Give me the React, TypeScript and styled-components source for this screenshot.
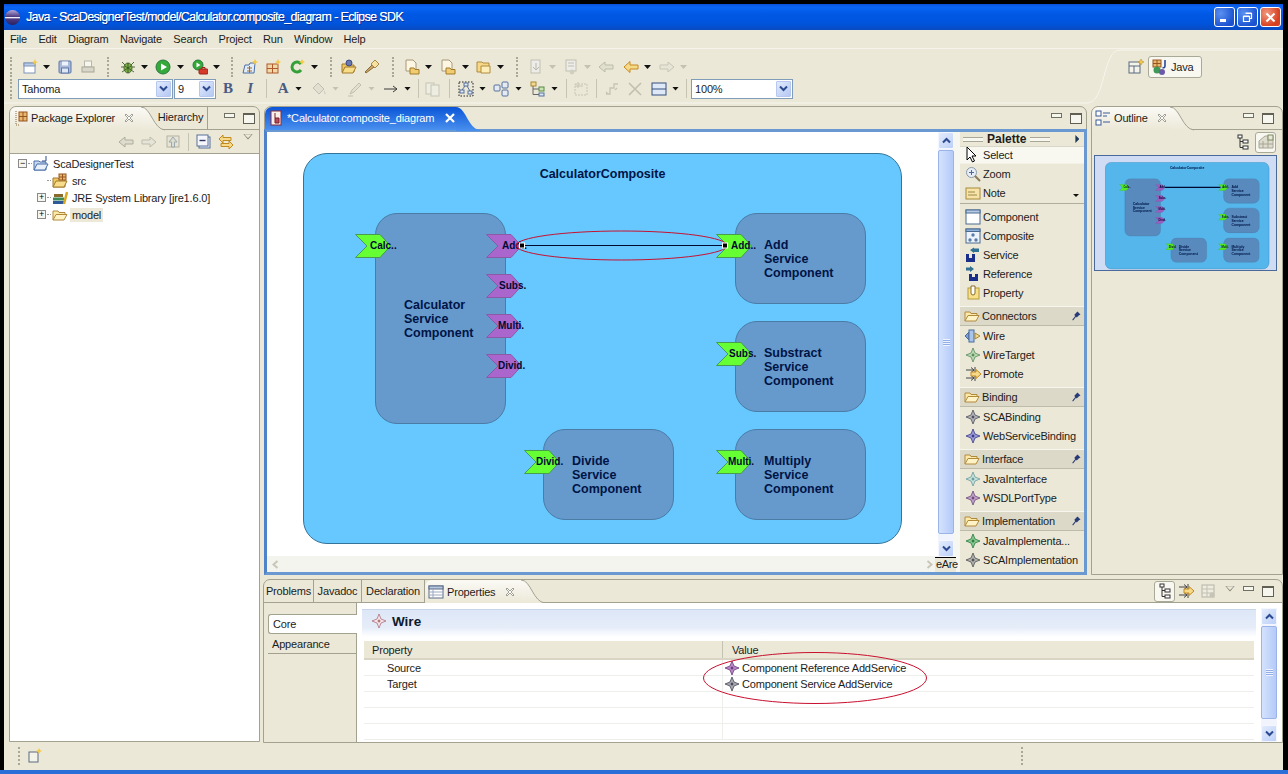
import React from 'react';
import styled, { createGlobalStyle } from 'styled-components';

const FONT = '"Liberation Sans", Arial, sans-serif';
const BG = '#ebe8d7';
const EDGE = '#a3a18f';

const GlobalStyle = createGlobalStyle`
  html, body { margin: 0; padding: 0; background: #000; overflow: hidden; }
  * { box-sizing: border-box; }
`;

// ---------- icons ----------
const star = '8,1 10,6 15,8 10,10 8,15 6,10 1,8 6,6';
const Diamond = ({ c, d }: { c: string; d: string }) => (
  <svg width="16" height="16" viewBox="0 0 16 16">
    <polygon points={star} fill={c} stroke={d} strokeWidth="0.8" />
    <rect x="6.8" y="6.8" width="2.4" height="2.4" fill={d} transform="rotate(45 8 8)" />
  </svg>
);

const Folder = () => (
  <svg width="16" height="16" viewBox="0 0 16 16">
    <path d="M1 13V4h5l1 1.5h6V8" fill="#fde8a8" stroke="#b08a3c" />
    <path d="M1 13l3-5.5h11L12 13z" fill="#fff2c4" stroke="#b08a3c" />
  </svg>
);

const icons: Record<string, React.ReactNode> = {
  newWin: (
    <>
      <rect x="2" y="4" width="11" height="10" fill="#fff" stroke="#7d93b8" />
      <rect x="2" y="4" width="11" height="3" fill="#b9cbe6" stroke="#7d93b8" />
      <polygon points="13,0 14,2.5 16,3 14,4 13,6.5 12,4 10,3 12,2.5" fill="#f3c94a" />
    </>
  ),
  save: (
    <>
      <rect x="2" y="2" width="12" height="12" rx="1" fill="#a9b9d8" stroke="#6078a8" />
      <rect x="5" y="2.5" width="6" height="4" fill="#eef2fa" />
      <rect x="4.5" y="9" width="7" height="5" fill="#dfe6f3" stroke="#6078a8" />
    </>
  ),
  print: (
    <>
      <rect x="4.5" y="2" width="7" height="6" fill="#f6f5ee" stroke="#b8b7a8" />
      <rect x="2" y="8" width="12" height="5" fill="#d8d6c8" stroke="#a8a798" />
    </>
  ),
  bug: (
    <>
      <path d="M2 3l3 3M14 3l-3 3M1 8h3M15 8h-3M2 13l3-2M14 13l-3-2" stroke="#4d6d3a" fill="none" />
      <ellipse cx="8" cy="9" rx="4" ry="5" fill="#7fb04a" stroke="#46682a" />
      <path d="M8 4v10M5 7l6 4M11 7l-6 4" stroke="#2f4d1c" strokeWidth="0.8" />
    </>
  ),
  run: (
    <>
      <circle cx="8" cy="8" r="7" fill="#35a83a" stroke="#2a7a40" />
      <polygon points="6,4.5 12,8 6,11.5" fill="#fff" />
    </>
  ),
  ext: (
    <>
      <circle cx="6" cy="6" r="5" fill="#35a83a" stroke="#2a7a40" />
      <polygon points="4.5,3.5 8.5,6 4.5,8.5" fill="#fff" />
      <rect x="7" y="10" width="9" height="5" rx="1" fill="#d83a2a" stroke="#982418" />
      <path d="M10 10V8.5h3V10" stroke="#982418" fill="none" />
    </>
  ),
  newPkg: (
    <>
      <path d="M1 14l2-8h4l1-2h5l-1 10z" fill="#e4ecf8" stroke="#4a6ea8" />
      <path d="M5 9h5M5 12h5M7.5 7v7" stroke="#a06a2a" />
      <polygon points="13,0 14,2 16,3 14,4 13,6 12,4 10,3 12,2" fill="#f3c94a" />
    </>
  ),
  newClass: (
    <>
      <rect x="2" y="5" width="11" height="9" fill="#f1d8a8" stroke="#b05a2a" />
      <path d="M7.5 5v9M2 9.5h11" stroke="#b05a2a" />
      <polygon points="13,0 14,2 16,3 14,4 13,6 12,4 10,3 12,2" fill="#f3c94a" />
    </>
  ),
  newG: (
    <>
      <path d="M12 11a5 5 0 1 1 0-6" fill="none" stroke="#35a03a" strokeWidth="3" />
      <polygon points="13,0 14,2 16,3 14,4 13,6 12,4 10,3 12,2" fill="#f3c94a" />
    </>
  ),
  openType: (
    <>
      <path d="M1 13V5h5l1 1h6v7z" fill="#f0c860" stroke="#a07a2c" />
      <path d="M1 14l3-6h11l-3 6z" fill="#f7dc8a" stroke="#a07a2c" />
      <circle cx="8" cy="4" r="3" fill="#6a78b0" stroke="#3e4a80" />
    </>
  ),
  torch: (
    <>
      <path d="M2 14l-1-1 7-7 2 2z" fill="#c8a468" stroke="#8a6c38" />
      <path d="M7 5l4-4 4 4-4 4z" fill="#f6e2a0" stroke="#a88a48" />
    </>
  ),
  fileA: (
    <>
      <path d="M2 1h7l3 3v8H2z" fill="#fdf6e2" stroke="#a89878" />
      <path d="M6 9h4l1 1.5h4V15H6z" fill="#f2cc70" stroke="#a07a2c" />
    </>
  ),
  fileB: (
    <>
      <path d="M1 3h5l1 1h6v9H1z" fill="#f6d888" stroke="#b08a3c" />
      <path d="M5 7h9v7H5z" fill="#fdeeb8" stroke="#b08a3c" />
    </>
  ),
  grayDocA: (
    <>
      <rect x="3" y="1" width="9" height="13" fill="#eee" stroke="#b4b3a6" />
      <path d="M8 4v6M5 8l3 3 3-3" stroke="#a9a89a" fill="none" />
    </>
  ),
  grayDocB: (
    <>
      <rect x="3" y="1" width="10" height="11" fill="#eee" stroke="#b4b3a6" />
      <path d="M5 4h6M5 7h6" stroke="#b4b3a6" />
      <circle cx="9" cy="13" r="2.4" fill="#c8c7b8" />
    </>
  ),
  backGray: <path d="M1 8l6-5v3h8v4H7v3z" fill="#dedccc" stroke="#aeac9c" />,
  fwdGray: <path d="M15 8L9 3v3H1v4h8v3z" fill="#e6e4d6" stroke="#bdbbac" />,
  backOrange: <path d="M1 8l6-5.5V6h8v4H7v3.500z" fill="#f7d98a" stroke="#c68a1e" />,
  upGray: (
    <>
      <rect x="2" y="2" width="12" height="11" fill="#e6e4d6" stroke="#b4b2a2" />
      <path d="M8 3l4 5H9.500v5h-3V8H4z" fill="#dedccc" stroke="#9aa8b0" />
    </>
  ),
  collapse: (
    <>
      <rect x="3" y="3" width="11" height="11" fill="#e4eaf4" stroke="#5a7098" />
      <rect x="1" y="1" width="11" height="11" fill="#f4f6fb" stroke="#5a7098" />
      <path d="M3.500 6.500h6" stroke="#2a3a60" strokeWidth="1.400" />
    </>
  ),
  link: (
    <>
      <path d="M1 5l4-4v2.500h8v3H5V9z" fill="#f7d98a" stroke="#c08a1e" />
      <path d="M15 11l-4-4v2.500H3v3h8V15z" fill="#f7d98a" stroke="#c08a1e" />
    </>
  ),
  fill: (
    <>
      <path d="M7 2l6 6-5 5-6-6z" fill="#dfddcf" stroke="#b4b2a4" />
      <path d="M13 9c1 2 2 3 1.500 4s-2 0-1.500-4z" fill="#c8c6b8" />
    </>
  ),
  pen: <path d="M3 13l2-4 7-7 2 2-7 7zM1 15h5" fill="#dedccc" stroke="#b4b2a4" />,
  lineArrow: <path d="M1 8h13M10 5l4 3-4 3" fill="none" stroke="#3a3a3a" />,
  docGray: (
    <>
      <rect x="1" y="2" width="8" height="11" fill="#f0efe6" stroke="#bab8aa" />
      <rect x="6" y="4" width="8" height="11" fill="#f0efe6" stroke="#bab8aa" />
    </>
  ),
  arrange: (
    <>
      <rect x="1" y="1" width="14" height="14" fill="none" stroke="#222" strokeDasharray="1.500 1.500" />
      <rect x="6" y="2" width="4" height="3" fill="#e4eaf4" stroke="#56709c" />
      <rect x="2" y="9" width="4" height="3" fill="#e4eaf4" stroke="#56709c" />
      <rect x="10" y="10" width="4" height="3" fill="#e4eaf4" stroke="#56709c" />
      <path d="M7 5l-3 4M9 5l3 5" stroke="#56709c" />
    </>
  ),
  align: (
    <>
      <rect x="1" y="4" width="6" height="6" rx="1" fill="#e4eaf4" stroke="#56709c" />
      <rect x="9" y="1" width="6" height="6" rx="1" fill="#e4eaf4" stroke="#56709c" />
      <rect x="9" y="9" width="6" height="6" rx="1" fill="#e4eaf4" stroke="#56709c" />
    </>
  ),
  treeAlign: (
    <>
      <rect x="1" y="1" width="5" height="4" fill="#f3d98c" stroke="#a88838" />
      <rect x="9" y="6" width="5" height="4" fill="#c8e4b0" stroke="#5a8a48" />
      <rect x="9" y="12" width="5" height="3" fill="#dbe6f6" stroke="#56709c" />
      <path d="M3 5v8.500h6M3 8h6" fill="none" stroke="#666" />
    </>
  ),
  frameGray: (
    <>
      <rect x="2" y="3" width="12" height="11" fill="none" stroke="#bbb9aa" strokeDasharray="2 1" />
      <path d="M5 1v6M2 5h8" stroke="#bbb9aa" />
    </>
  ),
  routeGray: <path d="M2 13h4V7h4V3h4M2 11l2 2M11 9l2-2" fill="none" stroke="#bbb9aa" strokeWidth="1.300" />,
  crossGray: <path d="M2 2l12 12M14 2L2 14" fill="none" stroke="#b4b2a4" strokeWidth="1.600" />,
  split: (
    <>
      <rect x="1" y="2" width="14" height="12" fill="#dfe8f6" stroke="#344f80" />
      <path d="M1 8h14" stroke="#344f80" />
    </>
  ),
  pkgExplorer: (
    <>
      <path d="M3 1v14h3" fill="none" stroke="#8a6a3a" strokeDasharray="1 1" />
      <rect x="6" y="2" width="8" height="9" fill="#e8b870" stroke="#96541e" />
      <path d="M10 2v9M6 6.500h8" stroke="#96541e" />
    </>
  ),
  project: (
    <>
      <path d="M1 14V5h5l1 1h6v8z" fill="#c8d8f0" stroke="#4a6ea8" />
      <path d="M1 14l3-6h11l-3 6z" fill="#e8f0fa" stroke="#4a6ea8" />
      <path d="M13 0v5H9" fill="none" stroke="#2a4a90" />
    </>
  ),
  srcFolder: (
    <>
      <path d="M1 14V5h5l1 1h6v8z" fill="#f0c860" stroke="#a07a2c" />
      <path d="M1 14l3-6h11l-3 6z" fill="#f7dc8a" stroke="#a07a2c" />
      <rect x="7" y="1" width="7" height="6" fill="#e8b870" stroke="#96541e" />
      <path d="M10.500 1v6M7 4h7" stroke="#96541e" />
    </>
  ),
  library: (
    <>
      <rect x="1" y="11" width="11" height="3" fill="#2e5a9a" />
      <rect x="1" y="7.500" width="11" height="3" fill="#3f8a54" />
      <rect x="2" y="4" width="9" height="3" fill="#8a6a2a" />
      <path d="M12 14l3-12" stroke="#d8a820" strokeWidth="2.500" />
    </>
  ),
  editorFile: (
    <>
      <rect x="3" y="1" width="10" height="14" fill="#f6f0e8" stroke="#8a2a3a" />
      <path d="M7 3v10h4V8H7" fill="#b84a5a" stroke="#7a1a2a" />
    </>
  ),
  outline: (
    <>
      <rect x="1" y="1" width="5" height="5" fill="#fff" stroke="#3a5a98" />
      <rect x="1" y="10" width="5" height="5" fill="#fff" stroke="#3a5a98" />
      <path d="M8 3h7M8 6h4M8 12h7" stroke="#3a5a98" />
    </>
  ),
  treeSmall: (
    <>
      <rect x="3" y="1" width="4" height="3" fill="#fff" stroke="#333" />
      <rect x="8" y="6" width="5" height="3" fill="#fff" stroke="#333" />
      <rect x="8" y="12" width="5" height="3" fill="#fff" stroke="#333" />
      <path d="M5 4v9.500h3M5 7.500h3" stroke="#333" fill="none" />
    </>
  ),
  thumb: (
    <>
      <path d="M1 7l6-5h8v12H1z" fill="#dedccc" stroke="#a8a698" />
      <path d="M1 10h14M5 7v7M10 3v11" stroke="#a8a698" />
      <rect x="10" y="1" width="5" height="5" fill="#e8e6d8" stroke="#7a8a60" />
    </>
  ),
  persp: (
    <>
      <rect x="1" y="3" width="11" height="11" fill="#f4f3ea" stroke="#5a6a80" />
      <path d="M1 7h11M6 7v7" stroke="#5a6a80" />
      <polygon points="13,0 14,2 16,3 14,4 13,6 12,4 10,3 12,2" fill="#f3c94a" stroke="#b08a2a" strokeWidth="0.500" />
    </>
  ),
  java: (
    <>
      <rect x="1" y="1" width="8" height="7" fill="#e8b870" stroke="#96541e" />
      <path d="M5 1v7M1 4.500h8" stroke="#96541e" />
      <circle cx="5" cy="11" r="3.500" fill="#3f9a58" />
      <circle cx="10" cy="13" r="3" fill="#6a5aa8" />
      <path d="M13 1v6c0 1.500-1 2-2.500 1.500" fill="none" stroke="#2a4a9a" strokeWidth="1.600" />
    </>
  ),
  table: (
    <>
      <rect x="1" y="2" width="14" height="12" fill="#fff" stroke="#5a6a88" />
      <rect x="1" y="2" width="14" height="3" fill="#b8c8e0" stroke="#5a6a88" />
      <path d="M1 8h14M1 11h14M5 5v9" stroke="#9aa8c0" />
    </>
  ),
  pointer: <path d="M2 0v13l3-3 2.500 5 2-1-2.500-5h4z" fill="#fff" stroke="#000" />,
  zoom: (
    <>
      <circle cx="6.500" cy="6.500" r="5" fill="#e6edf6" stroke="#8a98a8" />
      <path d="M4 6.500h5M6.500 4v5" stroke="#4a6a9a" />
      <path d="M10 10l5 5" stroke="#8a7a5a" strokeWidth="2" />
    </>
  ),
  note: (
    <>
      <rect x="1" y="3" width="14" height="11" fill="#f7e3a8" stroke="#a88a3a" />
      <path d="M3 7h7M3 10h9" stroke="#9a8a4a" />
    </>
  ),
  component: (
    <>
      <rect x="1" y="1" width="14" height="14" fill="#fff" stroke="#4a6a90" />
      <rect x="1" y="1" width="14" height="3" fill="#b6cce6" stroke="#4a6a90" />
    </>
  ),
  composite: (
    <>
      <rect x="1" y="1" width="14" height="14" fill="#eef2fa" stroke="#4a6a90" />
      <rect x="1" y="1" width="14" height="2.500" fill="#8fb0d8" stroke="#4a6a90" />
      <circle cx="8" cy="7" r="1.700" fill="#5a7ca8" />
      <circle cx="5" cy="12" r="1.700" fill="#5a7ca8" />
      <circle cx="11" cy="12" r="1.700" fill="#5a7ca8" />
    </>
  ),
  service: (
    <>
      <polygon points="5,3 9,0.500 9,1.500 14,1.500 14,5 9,5 9,6" fill="#2f6f92" />
      <path d="M1 7h3v4h3V7h3v8H1z" fill="#1a2f8a" />
    </>
  ),
  reference: (
    <>
      <polygon points="1,1.500 5,1.500 5,0 9,3 5,6 5,4.500 1,4.500" fill="#2f6f92" />
      <path d="M4 8h3v3h3V8h3v7H4z" fill="#1a2f8a" />
    </>
  ),
  property: (
    <>
      <rect x="3" y="3" width="11" height="11" fill="#f6e08a" stroke="#b89a3a" />
      <path d="M6 1h4v7a2 2 0 0 1-4 0z" fill="#fff" stroke="#8a6a2a" />
    </>
  ),
  wire: (
    <>
      <polygon points="0,8 4,4 4,12" fill="#7da0d8" stroke="#4a6a9a" />
      <rect x="4" y="2" width="5" height="12" fill="#a8c4ea" stroke="#4a6a9a" />
      <polygon points="10,5 15,8 10,11" fill="#f3d98c" stroke="#a88838" />
    </>
  ),
  promote: (
    <>
      <path d="M1 4h8M6 1.500L9 4 6 6.500M10 1v6" stroke="#444" fill="none" />
      <path d="M1 12h8M6 9.500L9 12l-3 2.500M10 9v6" stroke="#444" fill="none" />
      <path d="M6 6h5V3.500L16 8l-5 4.500V10H6z" fill="#f7d98a" stroke="#c08a1e" />
    </>
  ),
  pin: <path d="M6 6l4-4 4 4-2 1-3 3-1-1-4 5-1-1 4-5-1-1z" fill="#283a78" />,
  grayTable: (
    <>
      <rect x="2" y="2" width="12" height="12" fill="#eeecdf" stroke="#b6b4a6" />
      <path d="M2 6h12M2 10h12M7 2v12" stroke="#c2c0b2" />
      <circle cx="12" cy="12" r="2.500" fill="#c6c4b6" />
    </>
  ),
  statusIcon: (
    <>
      <rect x="2" y="4" width="9" height="10" fill="#f4f3ea" stroke="#5a6a80" />
      <polygon points="12,0 13,2 15,3 13,4 12,6 11,4 9,3 11,2" fill="#f3c94a" />
    </>
  ),
};

const IconSvg = styled.svg`
  display: block;
  flex: none;
`;

const Icon = ({ n, size = 16 }: { n: string; size?: number }) => (
  <IconSvg width={size} height={size} viewBox="0 0 16 16">
    {icons[n]}
  </IconSvg>
);

// ---------- window chrome ----------
const Screen = styled.div`
  width: 1288px;
  height: 774px;
  display: flex;
  flex-direction: column;
  background: #000;
  font-family: ${FONT};
  font-size: 11px;
  letter-spacing: -0.17px;
  color: #1c1c1c;
  position: relative;
  overflow: hidden;
`;

const Frame = styled.div`
  flex: 1;
  display: flex;
  flex-direction: column;
  margin: 4px 5px 0 4px;
  background: ${BG};
  min-height: 0;
`;

const BottomStrip = styled.div`
  height: 4px;
  background: #2a6fd8;
`;

const TitleBar = styled.div`
  height: 26px;
  flex: none;
  display: flex;
  align-items: center;
  padding-left: 1px;
  color: #fff;
  font-size: 12.5px;
  letter-spacing: -0.63px;
  text-shadow: 1px 1px 0 #0a2f8f, 0.4px 0 0 #fff;
  background: linear-gradient(180deg, #0a50d8 0%, #0a66f4 12%, #0058e4 40%, #0054dc 75%, #0a4ac0 100%);
`;

const AppGlobe = styled.span`
  width: 15px;
  height: 15px;
  border-radius: 50%;
  margin-right: 6px;
  background: linear-gradient(180deg, #b8a8d8 0%, #4a3a80 45%, #f0eefa 50%, #4a3a80 60%, #2a1f60 100%);
`;

const TitleText = styled.span`
  flex: 1;
`;

const Controls = styled.div`
  display: flex;
  gap: 2px;
  margin-right: 2px;
`;

const WinButton = styled.div<{ $close?: boolean }>`
  width: 21px;
  height: 20px;
  border: 1px solid #fff;
  border-radius: 3px;
  display: flex;
  align-items: center;
  justify-content: center;
  background: ${(p) =>
    p.$close
      ? 'radial-gradient(circle at 30% 30%, #f09a80, #d8401f 70%)'
      : 'radial-gradient(circle at 30% 30%, #5a90f0, #1a52d0 75%)'};
`;

const MenuBar = styled.div`
  height: 19px;
  flex: none;
  display: flex;
  align-items: center;
  gap: 11.4px;
  padding-left: 6px;
  border-bottom: 1px solid #f6f4ea;
`;

// ---------- toolbars ----------
const Toolbars = styled.div`
  height: 56px;
  flex: none;
  padding-top: 7px;
  position: relative;
`;

const ToolRow = styled.div<{ $h: number }>`
  display: flex;
  align-items: center;
  height: ${(p) => p.$h}px;
  position: relative;
`;

const ToolGrip = styled.span<{ $ml: number }>`
  margin-left: ${(p) => p.$ml}px;
  width: 3px;
  height: 20px;
  flex: none;
  border-left: 2px dotted #a9a795;
`;

const ToolIcon = styled.span<{ $ml: number; $faded?: boolean }>`
  margin-left: ${(p) => p.$ml}px;
  width: 16px;
  height: 16px;
  flex: none;
  opacity: ${(p) => (p.$faded ? 0.75 : 1)};
`;

const DropArrow = styled.span<{ $ml: number; $faded?: boolean }>`
  margin-left: ${(p) => p.$ml}px;
  width: 7px;
  height: 4px;
  flex: none;
  background: ${(p) => (p.$faded ? '#c4c2b2' : '#111')};
  clip-path: polygon(0 0, 100% 0, 50% 100%);
`;

const ToolSep = styled.span<{ $ml: number }>`
  margin-left: ${(p) => p.$ml}px;
  width: 1px;
  height: 19px;
  flex: none;
  background: #c5c3b2;
`;

const StyleGlyph = styled.span<{ $ml: number; $italic?: boolean }>`
  margin-left: ${(p) => p.$ml}px;
  width: 16px;
  flex: none;
  text-align: center;
  font-family: "Liberation Serif", serif;
  font-size: 15px;
  font-weight: bold;
  font-style: ${(p) => (p.$italic ? 'italic' : 'normal')};
  color: #4a5c82;
`;

const Combo = styled.div<{ $ml: number; $w: number }>`
  margin-left: ${(p) => p.$ml}px;
  width: ${(p) => p.$w}px;
  height: 20px;
  flex: none;
  display: flex;
  align-items: center;
  justify-content: space-between;
  background: #fff;
  border: 1px solid #7f9db9;
  padding: 0 1px 0 3px;
`;

const ComboButton = styled.span`
  width: 15px;
  height: 16px;
  border-radius: 1px;
  border: 1px solid #b6c8f0;
  background: linear-gradient(135deg, #e2eafc, #b4c8f4);
  display: flex;
  align-items: center;
  justify-content: center;
`;

const Chevron = ({ up }: { up?: boolean }) => (
  <svg width="9" height="7" viewBox="0 0 9 7">
    <path d={up ? 'M1 5.500l3.500-3.500L8 5.500' : 'M1 1.500L4.500 5 8 1.500'} fill="none" stroke="#2c4a90" strokeWidth="2" />
  </svg>
);

const SideArrow = ({ right }: { right?: boolean }) => (
  <svg width="7" height="9" viewBox="0 0 7 9">
    <path d={right ? 'M1.500 1L5.500 4.500 1.500 8' : 'M5.500 1L1.500 4.500 5.500 8'} fill="none" stroke="#c8c7ba" strokeWidth="2" />
  </svg>
);

type Tool =
  | { t: 'grip' | 'sep' | 'arrow' | 'fadedArrow'; ml: number }
  | { t: 'icon' | 'faded'; ml: number; n: string }
  | { t: 'glyph' | 'italic'; ml: number; text: string }
  | { t: 'combo'; ml: number; w: number; text: string };

const g = (ml: number): Tool => ({ t: 'grip', ml });
const s = (ml: number): Tool => ({ t: 'sep', ml });
const a = (ml: number): Tool => ({ t: 'arrow', ml });
const fa = (ml: number): Tool => ({ t: 'fadedArrow', ml });
const i = (ml: number, n: string): Tool => ({ t: 'icon', ml, n });
const fi = (ml: number, n: string): Tool => ({ t: 'faded', ml, n });

const topTools: Tool[] = [
  g(6), i(9, 'newWin'), a(5), i(7, 'save'), i(7, 'print'),
  g(11), i(10, 'bug'), a(5), i(7, 'run'), a(6), i(8, 'ext'), a(5),
  g(11), i(8, 'newPkg'), i(7, 'newClass'), i(8, 'newG'), a(6),
  g(12), i(8, 'openType'), i(7, 'torch'),
  g(12), i(9, 'fileA'), a(5), i(8, 'fileA'), a(6), i(7, 'fileB'), a(5),
  g(12), fi(9, 'grayDocA'), fa(5), fi(7, 'grayDocB'), fa(5),
  fi(7, 'backGray'), i(9, 'backOrange'), a(5), fi(8, 'fwdGray'), fa(5),
];

const bottomTools: Tool[] = [
  g(6),
  { t: 'combo', ml: 5, w: 155, text: 'Tahoma' },
  { t: 'combo', ml: 1, w: 42, text: '9' },
  { t: 'glyph', ml: 4, text: 'B' },
  { t: 'italic', ml: 6, text: 'I' },
  s(8),
  { t: 'glyph', ml: 8, text: 'A' },
  a(4), fi(9, 'fill'), fa(5), fi(8, 'pen'), fa(5), i(8, 'lineArrow'), a(5),
  s(7), fi(6, 'docGray'), s(8),
  i(8, 'arrange'), a(5), i(7, 'align'), a(6), i(8, 'treeAlign'), a(5),
  s(8), fi(6, 'frameGray'), s(7), fi(7, 'routeGray'), fi(7, 'crossGray'),
  i(8, 'split'), a(5), s(7),
  { t: 'combo', ml: 4, w: 102, text: '100%' },
];

const ToolItem = ({ tool }: { tool: Tool }) => {
  switch (tool.t) {
    case 'grip':
      return <ToolGrip $ml={tool.ml} />;
    case 'sep':
      return <ToolSep $ml={tool.ml} />;
    case 'arrow':
      return <DropArrow $ml={tool.ml} />;
    case 'fadedArrow':
      return <DropArrow $ml={tool.ml} $faded />;
    case 'icon':
      return <ToolIcon $ml={tool.ml}><Icon n={tool.n} /></ToolIcon>;
    case 'faded':
      return <ToolIcon $ml={tool.ml} $faded><Icon n={tool.n} /></ToolIcon>;
    case 'glyph':
      return <StyleGlyph $ml={tool.ml}>{tool.text}</StyleGlyph>;
    case 'italic':
      return <StyleGlyph $ml={tool.ml} $italic>{tool.text}</StyleGlyph>;
    default:
      return (
        <Combo $ml={tool.ml} $w={tool.w}>
          {tool.text}
          <ComboButton><Chevron /></ComboButton>
        </Combo>
      );
  }
};

const PerspectiveCurve = styled.svg`
  position: absolute;
  left: 0;
  top: 0;
  width: 1279px;
  height: 56px;
`;

const PerspectiveBar = styled.div`
  position: absolute;
  left: 1124px;
  top: 7px;
  display: flex;
  align-items: center;
  gap: 4px;
`;

const PerspectiveButton = styled.div`
  width: 54px;
  height: 22px;
  display: flex;
  align-items: center;
  gap: 3px;
  padding-left: 3px;
  background: #f8f7f0;
  border: 1px solid #a9a998;
  border-radius: 3px;
`;

// ---------- panes ----------
const Workbench = styled.div`
  flex: 1;
  display: flex;
  padding: 1px 0 0 5px;
  gap: 3px;
  min-height: 0;
`;

const Pane = styled.div<{ $w?: number }>`
  ${(p) => (p.$w ? `width: ${p.$w}px; flex: none;` : 'flex: 1;')}
  display: flex;
  flex-direction: column;
  min-width: 0;
  border: 1px solid ${EDGE};
  border-radius: 7px 7px 0 0;
  background: ${BG};
`;

const TabStrip = styled.div`
  height: 23px;
  flex: none;
  display: flex;
  align-items: stretch;
  border-bottom: 1px solid ${EDGE};
`;

const ActiveTab = styled.div<{ $w: number; $blue?: boolean; $gap?: number; $lift?: boolean }>`
  width: ${(p) => p.$w}px;
  flex: none;
  position: relative;
  display: flex;
  align-items: center;
  gap: ${(p) => p.$gap ?? 3}px;
  padding: 0 0 ${(p) => (p.$lift ? 2 : 0)}px 3px;
  margin-bottom: -1px;
  white-space: nowrap;
  border-radius: 7px 0 0 0;
  color: ${(p) => (p.$blue ? '#fff' : '#1c1c1c')};
  background: ${(p) =>
    p.$blue ? 'linear-gradient(180deg, #0a55d8, #4a90ee)' : `linear-gradient(180deg, #fbfaf5, ${BG})`};
`;

const TabCurveSvg = styled.svg`
  position: absolute;
  left: 100%;
  top: 0;
  width: 24px;
  height: 24px;
`;

const TabCurve = ({ blue }: { blue?: boolean }) => (
  <TabCurveSvg viewBox="0 0 24 24">
    <defs>
      <linearGradient id={blue ? 'curveBlue' : 'curveLight'} x1="0" y1="0" x2="0" y2="1">
        <stop offset="0" stopColor={blue ? '#0a55d8' : '#fbfaf5'} />
        <stop offset="1" stopColor={blue ? '#4a90ee' : BG} />
      </linearGradient>
    </defs>
    <path d="M0 0C10 0 12 22 24 23V24H0z" fill={`url(#${blue ? 'curveBlue' : 'curveLight'})`} />
    {!blue && <path d="M0 0C10 0 12 22 24 23" fill="none" stroke={EDGE} />}
  </TabCurveSvg>
);

const TabClose = styled.span<{ $ml: number }>`
  margin-left: ${(p) => p.$ml}px;
  width: 10px;
  height: 10px;
  flex: none;
  display: block;
`;

const CloseMark = ({ white }: { white?: boolean }) => (
  <IconSvg width="10" height="10" viewBox="0 0 10 10">
    {white ? (
      <path d="M1 1l8 8M9 1L1 9" stroke="#fff" strokeWidth="2.200" />
    ) : (
      <path d="M1 2l1-1 3 3 3-3 1 1-3 3 3 3-1 1-3-3-3 3-1-1 3-3z" fill="#fff" stroke="#8a8a7c" strokeWidth="0.800" />
    )}
  </IconSvg>
);

const InactiveTab = styled.div<{ $w: number; $ml?: number; $pr?: number; $lift?: boolean }>`
  width: ${(p) => p.$w}px;
  margin-left: ${(p) => p.$ml ?? 0}px;
  padding: 0 ${(p) => p.$pr ?? 0}px ${(p) => (p.$lift ? 2 : 0)}px 0;
  flex: none;
  display: flex;
  align-items: center;
  justify-content: center;
  white-space: nowrap;
  border-right: 1px solid ${EDGE};
`;

const Spring = styled.div`
  flex: 1;
`;

const PaneActions = styled.div<{ $mr?: number }>`
  display: flex;
  align-items: center;
  gap: 6px;
  margin-right: ${(p) => p.$mr ?? 4}px;
`;

const MinBox = styled.span<{ $ml?: number }>`
  width: 11px;
  height: 5px;
  margin: -6px 2px 0 ${(p) => p.$ml ?? 0}px;
  background: #f7f6ee;
  border: 1px solid #6f6f62;
`;

const MaxBox = styled.span`
  width: 12px;
  height: 11px;
  background: #f7f6ee;
  border: 1px solid #5f5f54;
  border-top-width: 2px;
`;

const ViewMenu = styled.span<{ $mr?: number; $mt: number }>`
  width: 10px;
  height: 6px;
  flex: none;
  margin-top: ${(p) => p.$mt}px;
  margin-right: ${(p) => p.$mr ?? 0}px;
  background: #77776a;
  clip-path: polygon(0 0, 100% 0, 50% 100%, 0 0, 12% 12%, 50% 78%, 88% 12%, 12% 12%);
`;

const ViewBar = styled.div<{ $h: number; $flat?: boolean }>`
  height: ${(p) => p.$h}px;
  flex: none;
  display: flex;
  align-items: center;
  justify-content: flex-end;
  border-bottom: ${(p) => (p.$flat ? 'none' : `1px solid ${EDGE}`)};
`;

const ViewTool = styled.span<{ $mr: number; $on?: boolean }>`
  margin-right: ${(p) => p.$mr}px;
  width: ${(p) => (p.$on ? 21 : 16)}px;
  height: ${(p) => (p.$on ? 21 : 16)}px;
  flex: none;
  display: flex;
  align-items: center;
  justify-content: center;
  ${(p) => p.$on && `background: #f8f7f0; border: 1px solid #a9a998; border-radius: 3px;`}
`;

const ViewSep = styled.span<{ $mr: number }>`
  margin-right: ${(p) => p.$mr}px;
  width: 1px;
  height: 18px;
  background: #c5c3b2;
`;

// ---------- package tree ----------
const Tree = styled.div`
  flex: 1;
  background: #fff;
  padding-top: 1px;
`;

const TreeRow = styled.div<{ $depth: number }>`
  height: 17px;
  display: flex;
  align-items: center;
  padding-left: ${(p) => 8 + p.$depth * 19}px;
`;

const Expander = styled.span<{ $hidden?: boolean }>`
  width: 9px;
  height: 9px;
  flex: none;
  margin-right: 1px;
  border: 1px solid ${(p) => (p.$hidden ? 'transparent' : '#8a8a8a')};
  color: #000;
  display: flex;
  align-items: center;
  justify-content: center;
  font-size: 9px;
  line-height: 1;
  background: ${(p) => (p.$hidden ? 'transparent' : '#f6f6f0')};
`;

const TreeDots = styled.span`
  width: 4px;
  margin-right: 1px;
  flex: none;
  border-top: 1px dotted #999;
`;

const TreeLabel = styled.span<{ $selected?: boolean }>`
  margin-left: 2px;
  padding: 1px 2px;
  background: ${(p) => (p.$selected ? '#ece9d8' : 'transparent')};
`;

// ---------- diagram ----------
const Diagram = styled.div`
  width: 599px;
  height: 391px;
  position: relative;
  flex: none;
  background: #66c8ff;
  border: 1px solid #33749a;
  border-radius: 24px;
  color: #001446;
  font-weight: bold;
  letter-spacing: 0;
`;

const DiagramTitle = styled.div`
  position: absolute;
  left: 0;
  right: 0;
  top: 13px;
  text-align: center;
  font-size: 12.5px;
`;

const Node = styled.div<{ $x: number; $y: number; $w: number; $h: number }>`
  position: absolute;
  left: ${(p) => p.$x}px;
  top: ${(p) => p.$y}px;
  width: ${(p) => p.$w}px;
  height: ${(p) => p.$h}px;
  display: flex;
  align-items: center;
  padding-left: 28px;
  background: #6699cc;
  border: 1px solid #4a7ca6;
  border-radius: 22px;
  font-size: 12.5px;
  line-height: 14px;
`;

const PortWrap = styled.div<{ $x: number; $y: number }>`
  position: absolute;
  left: ${(p) => p.$x}px;
  top: ${(p) => p.$y}px;
  width: 36px;
  height: 24px;
  font-size: 10px;
  line-height: 23px;
  white-space: nowrap;
`;

const PortShape = styled.svg`
  position: absolute;
  left: 0;
  top: 0;
`;

const PortLabel = styled.span<{ $dx: number }>`
  position: absolute;
  left: ${(p) => p.$dx}px;
  top: 0;
  color: #000a30;
`;

const Port = ({ x, y, kind, text, dx }: { x: number; y: number; kind: 'in' | 'out'; text: string; dx: number }) => (
  <PortWrap $x={x} $y={y}>
    <PortShape width="36" height="24" viewBox="0 0 36 24">
      <polygon
        points="0.500,0.500 25,0.500 35.500,12 25,23.500 0.500,23.500 12,12"
        fill={kind === 'in' ? '#66ff33' : '#aa66cc'}
        stroke={kind === 'in' ? '#4a9a50' : '#8a5aa6'}
      />
    </PortShape>
    <PortLabel $dx={dx}>{text}</PortLabel>
  </PortWrap>
);

const WireLayer = styled.svg`
  position: absolute;
  left: 0;
  top: 0;
  width: 598px;
  height: 391px;
  pointer-events: none;
`;

const DiagramContent = ({ marked }: { marked?: boolean }) => (
  <Diagram>
    <DiagramTitle>CalculatorComposite</DiagramTitle>
    <Node $x={71} $y={59} $w={131} $h={211}>Calculator<br />Service<br />Component</Node>
    <Node $x={431} $y={59} $w={131} $h={91}>Add<br />Service<br />Component</Node>
    <Node $x={431} $y={167} $w={131} $h={91}>Substract<br />Service<br />Component</Node>
    <Node $x={239} $y={275} $w={131} $h={91}>Divide<br />Service<br />Component</Node>
    <Node $x={431} $y={275} $w={131} $h={91}>Multiply<br />Service<br />Component</Node>
    <Port x={51} y={80} kind="in" text="Calc.." dx={15} />
    <Port x={182} y={80} kind="out" text="Add.." dx={16} />
    <Port x={182} y={120} kind="out" text="Subs." dx={13} />
    <Port x={182} y={160} kind="out" text="Multi." dx={12} />
    <Port x={182} y={200} kind="out" text="Divid." dx={12} />
    <Port x={412} y={80} kind="in" text="Add.." dx={15} />
    <Port x={412} y={188} kind="in" text="Subs." dx={13} />
    <Port x={220} y={296} kind="in" text="Divid." dx={12} />
    <Port x={412} y={296} kind="in" text="Multi." dx={12} />
    <WireLayer viewBox="0 0 598 391">
      <path d="M218 91.500H420" stroke="#000a30" strokeWidth={marked ? 1.2 : 5} />
      {marked && (
        <>
          <ellipse cx="317.500" cy="91.500" rx="105.500" ry="14.500" fill="none" stroke="#c8102e" />
          <rect x="215.500" y="89" width="5" height="5" fill="#000" stroke="#fff" />
          <rect x="418.500" y="89" width="5" height="5" fill="#000" stroke="#fff" />
        </>
      )}
    </WireLayer>
  </Diagram>
);

// ---------- editor ----------
const EditorColumn = styled.div`
  flex: none;
  width: 1020px;
  display: flex;
  flex-direction: column;
  gap: 4px;
`;

const TopRow = styled.div`
  flex: none;
  height: 469px;
  display: flex;
  gap: 4px;
  padding-left: 1px;
`;

const EditorPane = styled(Pane)`
  flex: none;
  width: 823px;
`;

const EditorFrame = styled.div`
  flex: 1;
  min-height: 0;
  display: flex;
  border: 3px solid #6a98d0;
  border-left-color: #4f82c8;
  margin: -1px;
  background: #fff;
`;

const CanvasColumn = styled.div`
  flex: 1;
  min-width: 0;
  display: flex;
  flex-direction: column;
  background: #fff;
`;

const Canvas = styled.div`
  flex: 1;
  min-height: 0;
  display: flex;
  padding: 21px 0 0 36px;
`;

const HScroll = styled.div`
  height: 16px;
  flex: none;
  display: flex;
  align-items: center;
  justify-content: space-between;
  padding: 0 5px;
  background: #f4f4ee;
`;

const VScroll = styled.div`
  width: 16px;
  flex: none;
  display: flex;
  flex-direction: column;
  background: #f1f4fc;
  position: relative;
`;

const ScrollButton = styled.div`
  height: 17px;
  flex: none;
  display: flex;
  align-items: center;
  justify-content: center;
  background: linear-gradient(135deg, #e4ecfc, #bcd0f8);
  border: 1px solid #f4f7ff;
  border-radius: 2px;
`;

const ScrollThumb = styled.div`
  flex: 1;
  margin: 1px 0;
  display: flex;
  align-items: center;
  justify-content: center;
  background: linear-gradient(90deg, #d4e2fd, #b4caf8);
  border: 1px solid #9ab4ea;
  border-radius: 2px;
`;

const ThumbLines = styled.span`
  width: 7px;
  height: 7px;
  background: repeating-linear-gradient(180deg, #eef3ff 0 1px, #92aee6 1px 2px);
`;

const ScrollGap = styled.div<{ $h: number }>`
  height: ${(p) => p.$h}px;
  flex: none;
`;

const CornerStub = styled.div`
  width: 21px;
  margin-left: -3px;
  flex: none;
  height: 15px;
  background: ${BG};
  border-top: 1px solid #000;
  white-space: nowrap;
  letter-spacing: -0.4px;
  padding-left: 1px;
  position: relative;
  z-index: 1;
`;

const PaletteSash = styled.div`
  width: 6px;
  flex: none;
  background: #f7f7f2;
`;

const Palette = styled.div`
  width: 124px;
  flex: none;
  background: ${BG};
  display: flex;
  flex-direction: column;
  overflow: hidden;
`;

const PaletteHead = styled.div`
  height: 14px;
  flex: none;
  display: flex;
  align-items: center;
  padding-left: 3px;
  font-weight: bold;
  font-size: 12px;
  letter-spacing: 0;
  gap: 4px;
`;

const HeadLines = styled.span`
  width: 20px;
  height: 5px;
  border-top: 1px solid #a9a795;
  border-bottom: 1px solid #a9a795;
  background: #f8f7ef;
`;

const HeadArrow = styled.span`
  margin-left: 21px;
  width: 4px;
  height: 8px;
  background: #1c3a58;
  clip-path: polygon(0 0, 100% 50%, 0 100%);
`;

const PaletteRow = styled.div<{ $active?: boolean; $h?: number }>`
  height: ${(p) => p.$h ?? 19}px;
  flex: none;
  position: relative;
  display: flex;
  align-items: center;
  gap: 2px;
  padding-left: 5px;
  ${(p) => p.$active && 'background: #f8f7f0; border-top: 1px solid #d8d6c6; border-bottom: 1px solid #f3f1e6;'}
`;

const NoteCaret = styled.span`
  position: absolute;
  right: 5px;
  top: 11px;
  width: 6px;
  height: 3px;
  background: #111;
  clip-path: polygon(0 0, 100% 0, 50% 100%);
`;

const PaletteGroup = styled.div`
  flex: none;
  border-top: 1px solid #b0ae9c;
  margin-top: 1px;
  padding-top: 3px;
`;

const Drawer = styled.div`
  height: 20px;
  flex: none;
  display: flex;
  align-items: center;
  gap: 2px;
  margin-top: 4px;
  padding: 0 2px 0 4px;
  background: #dcd9c8;
  border-top: 1px solid #f7f6ee;
  border-bottom: 1px solid #bdbba9;
`;

const DrawerLabel = styled.span`
  flex: 1;
`;

const paletteTools: [string, string][] = [
  ['component', 'Component'],
  ['composite', 'Composite'],
  ['service', 'Service'],
  ['reference', 'Reference'],
  ['property', 'Property'],
];

type Entry = { label: string; icon?: string; c?: string; d?: string };

const drawers: { title: string; items: Entry[] }[] = [
  {
    title: 'Connectors',
    items: [
      { label: 'Wire', icon: 'wire' },
      { label: 'WireTarget', c: '#b8d8b0', d: '#5a8a60' },
      { label: 'Promote', icon: 'promote' },
    ],
  },
  {
    title: 'Binding',
    items: [
      { label: 'SCABinding', c: '#b0b0b8', d: '#50505c' },
      { label: 'WebServiceBinding', c: '#9a9ad8', d: '#3a3a88' },
    ],
  },
  {
    title: 'Interface',
    items: [
      { label: 'JavaInterface', c: '#c4e0dc', d: '#6a9a9a' },
      { label: 'WSDLPortType', c: '#c0a0c8', d: '#6a4a78' },
    ],
  },
  {
    title: 'Implementation',
    items: [
      { label: 'JavaImplementa...', c: '#88c890', d: '#2a7a40' },
      { label: 'SCAImplementation', c: '#b0b0b0', d: '#505050' },
    ],
  },
];

// ---------- outline ----------
const Thumbnail = styled.div`
  height: 116px;
  flex: none;
  margin: 1px 5px 0 2px;
  padding: 6px 0 0 10px;
  background: #d0dcf4;
  border: 1px solid #49699b;
  overflow: hidden;
`;

const ThumbScale = styled.div`
  width: 164px;
  height: 107px;
  transform-origin: 0 0;
  transform: scale(0.2742);
  filter: brightness(0.9) saturate(1.1);
`;

// ---------- properties ----------
const PropsBody = styled.div`
  flex: 1;
  min-height: 0;
  display: flex;
`;

const SideTabs = styled.div`
  width: 93px;
  flex: none;
  padding: 11px 0 0 4px;
  border-right: 1px solid ${EDGE};
`;

const SideTab = styled.div<{ $on?: boolean }>`
  height: 20px;
  display: flex;
  align-items: center;
  padding-left: 4px;
  margin-right: ${(p) => (p.$on ? -1 : 0)}px;
  position: relative;
  ${(p) =>
    p.$on
      ? `background: #fff; border-radius: 3px 0 0 3px; border: 1px solid ${EDGE}; border-right: 0;`
      : `border-bottom: 1px solid ${EDGE};`}
`;

const PropsMain = styled.div`
  flex: 1;
  min-width: 0;
  display: flex;
  background: #fff;
  padding: 6px 0 0 5px;
  position: relative;
`;

const PropsContent = styled.div`
  width: 894px;
  flex: none;
  display: flex;
  flex-direction: column;
`;

const WireHeader = styled.div`
  height: 28px;
  flex: none;
  display: flex;
  align-items: center;
  gap: 5px;
  padding: 0 0 5px 9px;
  font-size: 13.5px;
  font-weight: bold;
  letter-spacing: 0;
  color: #0e1a2e;
  border-top: 1px solid #c8d4e8;
  background: linear-gradient(180deg, #dde7f7 0%, #e6edf9 65%, #fff 100%);
`;

const PropTable = styled.div`
  margin: 4px 2px 0 2px;
  display: flex;
  flex-direction: column;
`;

const PropHead = styled.div`
  height: 19px;
  flex: none;
  display: grid;
  grid-template-columns: 358px 1fr;
  align-items: center;
  background: ${BG};
  border-bottom: 2px solid #d8d5c4;
`;

const HeadCell = styled.div<{ $line?: boolean }>`
  padding-left: ${(p) => (p.$line ? 9 : 8)}px;
  height: 100%;
  display: flex;
  align-items: center;
  ${(p) => p.$line && 'border-left: 1px solid #c4c2b0;'}
`;

const PropRow = styled.div`
  height: 16px;
  flex: none;
  display: grid;
  grid-template-columns: 358px 1fr;
  align-items: center;
  border-bottom: 1px solid #eeeeea;
`;

const NameCell = styled.div`
  padding-left: 23px;
`;

const ValueCell = styled.div`
  height: 100%;
  display: flex;
  align-items: center;
  padding-left: 1px;
  gap: 2px;
  border-left: 1px solid #eeeeea;
`;

const PropScroll = styled(VScroll)`
  margin-left: 5px;
  margin-top: -1px;
  height: 134px;
`;

const CalloutOval = styled.svg`
  position: absolute;
  left: 345px;
  top: 48px;
  width: 226px;
  height: 54px;
  pointer-events: none;
`;

// ---------- status ----------
const StatusBar = styled.div`
  height: 28px;
  flex: none;
  display: flex;
  align-items: center;
  gap: 7px;
  padding-left: 14px;
`;

const StatusGrip = styled.span<{ $ml?: number }>`
  margin-left: ${(p) => p.$ml ?? 0}px;
  width: 2px;
  height: 18px;
  border-left: 2px dotted #a9a795;
`;

const WinCtl = ({ kind }: { kind: 'min' | 'max' | 'close' }) => (
  <WinButton $close={kind === 'close'}>
    <svg width="13" height="13" viewBox="0 0 13 13">
      {kind === 'min' && <rect x="2" y="8" width="6" height="3" fill="#fff" />}
      {kind === 'max' && (
        <path d="M4.500 2.500h6v5h-2M2.500 5.500h6v5h-6z M4.500 2h6M2.500 5h6" fill="none" stroke="#fff" strokeWidth="1.200" />
      )}
      {kind === 'close' && <path d="M2.500 2.500l8 8M10.500 2.500l-8 8" stroke="#fff" strokeWidth="2" />}
    </svg>
  </WinButton>
);

export default function App() {
  return (
    <>
      <GlobalStyle />
      <Screen>
        <Frame>
          <TitleBar>
            <AppGlobe />
            <TitleText>Java - ScaDesignerTest/model/Calculator.composite_diagram - Eclipse SDK</TitleText>
            <Controls>
              <WinCtl kind="min" />
              <WinCtl kind="max" />
              <WinCtl kind="close" />
            </Controls>
          </TitleBar>

          <MenuBar>
            {['File', 'Edit', 'Diagram', 'Navigate', 'Search', 'Project', 'Run', 'Window', 'Help'].map((m) => (
              <span key={m}>{m}</span>
            ))}
          </MenuBar>

          <Toolbars>
            <PerspectiveCurve viewBox="0 0 1279 56">
              <path d="M1279 1H1116C1098 1 1102 54 1083 54H0" fill="none" stroke="#f7f6ee" />
            </PerspectiveCurve>
            <ToolRow $h={22}>
              {topTools.map((tool, idx) => <ToolItem key={idx} tool={tool} />)}
            </ToolRow>
            <ToolRow $h={21}>
              {bottomTools.map((tool, idx) => <ToolItem key={idx} tool={tool} />)}
            </ToolRow>
            <PerspectiveBar>
              <Icon n="persp" />
              <PerspectiveButton>
                <Icon n="java" />
                Java
              </PerspectiveButton>
            </PerspectiveBar>
          </Toolbars>

          <Workbench>
            <Pane $w={251}>
              <TabStrip>
                <ActiveTab $w={131} $gap={2} $lift>
                  <Icon n="pkgExplorer" />
                  Package Explorer
                  <TabClose $ml={7}><CloseMark /></TabClose>
                  <TabCurve />
                </ActiveTab>
                <InactiveTab $w={49} $ml={18} $pr={5} $lift>Hierarchy</InactiveTab>
                <Spring />
                <PaneActions $mr={4}>
                  <MinBox />
                  <MaxBox />
                </PaneActions>
              </TabStrip>
              <ViewBar $h={24}>
                <ViewTool $mr={7}><Icon n="backGray" /></ViewTool>
                <ViewTool $mr={8}><Icon n="fwdGray" /></ViewTool>
                <ViewTool $mr={7}><Icon n="upGray" /></ViewTool>
                <ViewSep $mr={7} />
                <ViewTool $mr={6}><Icon n="collapse" /></ViewTool>
                <ViewTool $mr={9}><Icon n="link" /></ViewTool>
                <ViewMenu $mr={6} $mt={-10} />
              </ViewBar>
              <Tree>
                <TreeRow $depth={0}>
                  <Expander>−</Expander>
                  <TreeDots />
                  <Icon n="project" />
                  <TreeLabel>ScaDesignerTest</TreeLabel>
                </TreeRow>
                <TreeRow $depth={1}>
                  <Expander $hidden />
                  <TreeDots />
                  <Icon n="srcFolder" />
                  <TreeLabel>src</TreeLabel>
                </TreeRow>
                <TreeRow $depth={1}>
                  <Expander>+</Expander>
                  <TreeDots />
                  <Icon n="library" />
                  <TreeLabel>JRE System Library [jre1.6.0]</TreeLabel>
                </TreeRow>
                <TreeRow $depth={1}>
                  <Expander>+</Expander>
                  <TreeDots />
                  <Folder />
                  <TreeLabel $selected>model</TreeLabel>
                </TreeRow>
              </Tree>
            </Pane>

            <EditorColumn>
              <TopRow>
                <EditorPane>
                  <TabStrip>
                    <ActiveTab $w={191} $blue $lift>
                      <Icon n="editorFile" />
                      <span>*Calculator.composite_diagram</span>
                      <TabClose $ml={8}><CloseMark white /></TabClose>
                      <TabCurve blue />
                    </ActiveTab>
                    <Spring />
                    <PaneActions $mr={4}>
                      <MinBox />
                      <MaxBox />
                    </PaneActions>
                  </TabStrip>
                  <EditorFrame>
                    <CanvasColumn>
                      <Canvas>
                        <DiagramContent marked />
                      </Canvas>
                      <HScroll>
                        <SideArrow />
                        <SideArrow right />
                      </HScroll>
                    </CanvasColumn>
                    <VScroll>
                      <ScrollButton><Chevron up /></ScrollButton>
                      <ScrollThumb><ThumbLines /></ScrollThumb>
                      <ScrollGap $h={5} />
                      <ScrollButton><Chevron /></ScrollButton>
                      <CornerStub>eAre</CornerStub>
                    </VScroll>
                    <PaletteSash />
                    <Palette>
                      <PaletteHead>
                        <HeadLines />
                        <span>Palette</span>
                        <HeadLines />
                        <HeadArrow />
                      </PaletteHead>
                      <PaletteRow $active $h={18}>
                        <Icon n="pointer" />
                        Select
                      </PaletteRow>
                      <PaletteRow>
                        <Icon n="zoom" />
                        Zoom
                      </PaletteRow>
                      <PaletteRow>
                        <Icon n="note" />
                        Note
                        <NoteCaret />
                      </PaletteRow>
                      <PaletteGroup>
                        {paletteTools.map(([n, label]) => (
                          <PaletteRow key={label}>
                            <Icon n={n} />
                            {label}
                          </PaletteRow>
                        ))}
                      </PaletteGroup>
                      {drawers.map((d) => (
                        <React.Fragment key={d.title}>
                          <Drawer>
                            <Folder />
                            <DrawerLabel>{d.title}</DrawerLabel>
                            <Icon n="pin" size={12} />
                          </Drawer>
                          {d.items.map((it) => (
                            <PaletteRow key={it.label}>
                              {it.icon ? <Icon n={it.icon} /> : <Diamond c={it.c as string} d={it.d as string} />}
                              {it.label}
                            </PaletteRow>
                          ))}
                        </React.Fragment>
                      ))}
                    </Palette>
                  </EditorFrame>
                </EditorPane>

                <Pane>
                  <TabStrip>
                    <ActiveTab $w={78} $lift>
                      <Icon n="outline" />
                      Outline
                      <TabClose $ml={6}><CloseMark /></TabClose>
                      <TabCurve />
                    </ActiveTab>
                    <Spring />
                    <PaneActions $mr={8}>
                      <MinBox />
                      <MaxBox />
                    </PaneActions>
                  </TabStrip>
                  <ViewBar $h={24} $flat>
                    <ViewTool $mr={4}><Icon n="treeSmall" /></ViewTool>
                    <ViewTool $mr={6} $on><Icon n="thumb" /></ViewTool>
                  </ViewBar>
                  <Thumbnail>
                    <ThumbScale>
                      <DiagramContent />
                    </ThumbScale>
                  </Thumbnail>
                </Pane>
              </TopRow>

              <Pane>
                <TabStrip>
                  <InactiveTab $w={50}>Problems</InactiveTab>
                  <InactiveTab $w={48}>Javadoc</InactiveTab>
                  <InactiveTab $w={63}>Declaration</InactiveTab>
                  <ActiveTab $w={96}>
                    <Icon n="table" />
                    <span>Properties</span>
                    <TabClose $ml={7}><CloseMark /></TabClose>
                    <TabCurve />
                  </ActiveTab>
                  <Spring />
                  <PaneActions $mr={8}>
                    <ViewTool $mr={-3} $on><Icon n="treeSmall" /></ViewTool>
                    <ViewTool $mr={0}><Icon n="promote" /></ViewTool>
                    <ViewTool $mr={3}><Icon n="grayTable" /></ViewTool>
                    <ViewMenu $mt={-5} />
                    <MinBox $ml={2} />
                    <MaxBox />
                  </PaneActions>
                </TabStrip>
                <PropsBody>
                  <SideTabs>
                    <SideTab $on>Core</SideTab>
                    <SideTab>Appearance</SideTab>
                  </SideTabs>
                  <PropsMain>
                    <PropsContent>
                      <WireHeader>
                        <Diamond c="#f4e4e8" d="#b0707c" />
                        Wire
                      </WireHeader>
                      <PropTable>
                        <PropHead>
                          <HeadCell>Property</HeadCell>
                          <HeadCell $line>Value</HeadCell>
                        </PropHead>
                        <PropRow>
                          <NameCell>Source</NameCell>
                          <ValueCell>
                            <Diamond c="#b888c8" d="#6a3a7a" />
                            Component Reference AddService
                          </ValueCell>
                        </PropRow>
                        <PropRow>
                          <NameCell>Target</NameCell>
                          <ValueCell>
                            <Diamond c="#a8a8b0" d="#484858" />
                            Component Service AddService
                          </ValueCell>
                        </PropRow>
                        <PropRow><NameCell /><ValueCell /></PropRow>
                        <PropRow><NameCell /><ValueCell /></PropRow>
                        <PropRow><NameCell /><ValueCell /></PropRow>
                      </PropTable>
                    </PropsContent>
                    <PropScroll>
                      <ScrollButton><Chevron up /></ScrollButton>
                      <ScrollThumb><ThumbLines /></ScrollThumb>
                      <ScrollGap $h={5} />
                      <ScrollButton><Chevron /></ScrollButton>
                    </PropScroll>
                    <CalloutOval viewBox="0 0 226 54">
                      <ellipse cx="113" cy="27" rx="111.500" ry="25.500" fill="none" stroke="#c8102e" />
                    </CalloutOval>
                  </PropsMain>
                </PropsBody>
              </Pane>
            </EditorColumn>
          </Workbench>

          <StatusBar>
            <StatusGrip />
            <Icon n="statusIcon" />
            <StatusGrip $ml={971} />
          </StatusBar>
        </Frame>
        <BottomStrip />
      </Screen>
    </>
  );
}
